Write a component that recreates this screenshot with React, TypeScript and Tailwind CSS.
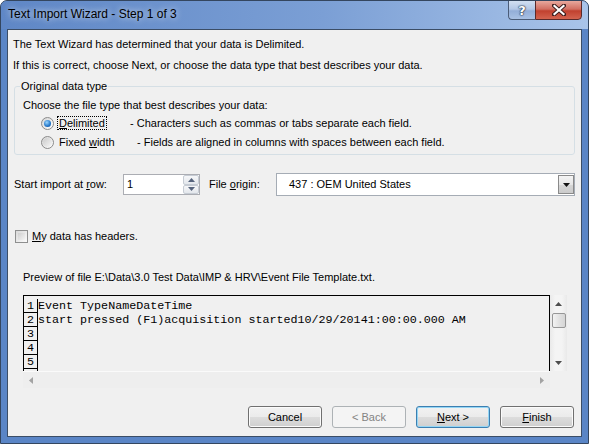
import React from "react";

function Radio({ checked }: { checked?: boolean }) {
  return (
    <span className="flex h-[13px] w-[13px] shrink-0 items-center justify-center rounded-full border border-[#8a8a8a] bg-[linear-gradient(135deg,#d4d4d4,#ffffff)]">
      {checked ? (
        <span className="h-[7px] w-[7px] rounded-full bg-[radial-gradient(circle_at_40%_35%,#9ad6ff,#2275c8_60%,#0f4f98)]" />
      ) : (
        <span className="h-[9px] w-[9px] rounded-full bg-[linear-gradient(135deg,#cbcbcb,#f7f7f7)]" />
      )}
    </span>
  );
}

function Btn({ children, kind = "normal" }: { children: React.ReactNode; kind?: "normal" | "default" | "disabled" }) {
  const look =
    kind === "disabled"
      ? "border-[#adb2b5] bg-[#f4f4f4] text-[#838383]"
      : kind === "default"
        ? "border-[#3c7fb1] bg-[linear-gradient(180deg,#f2f2f2_0%,#ebebeb_50%,#dddddd_50%,#cfcfcf_100%)] shadow-[inset_0_0_0_1px_#94d6f5]"
        : "border-[#707070] bg-[linear-gradient(180deg,#f2f2f2_0%,#ebebeb_50%,#dddddd_50%,#cfcfcf_100%)] shadow-[inset_0_0_0_1px_#fbfbfb]";
  return (
    <div className={`flex h-[22px] w-[74px] items-center justify-center rounded-[3px] border ${look}`}>
      {children}
    </div>
  );
}

function Tri({ dir, color = "#4a4a4a" }: { dir: "up" | "down" | "left" | "right"; color?: string }) {
  const pts = {
    up: "0,4 7,4 3.5,0",
    down: "0,0 7,0 3.5,4",
    left: "4,0 4,7 0,3.5",
    right: "0,0 0,7 4,3.5",
  }[dir];
  const w = dir === "up" || dir === "down" ? 7 : 4;
  const h = dir === "up" || dir === "down" ? 4 : 7;
  return (
    <svg width={w} height={h} viewBox={`0 0 ${w} ${h}`}>
      <polygon points={pts} fill={color} />
    </svg>
  );
}

// preview lines; the last cell is only partly visible, so it has no number
const rows = [
  "Event TypeNameDateTime",
  "start pressed (F1)acquisition started10/29/20141:00:00.000 AM",
  "",
  "",
  "",
];

export default function App() {
  return (
    <div className="flex h-[444px] w-[589px] flex-col overflow-hidden rounded-t-[7px] border border-[#34465f] bg-[#5a85c6] font-['Liberation_Sans',Arial,sans-serif] text-[11px] leading-[15px] text-black">
      {/* title bar */}
      <div className="flex h-[28px] shrink-0 items-start justify-between bg-[linear-gradient(90deg,#5f87c6_0%,#7b9fd5_55%,#a9c4e9_100%)]">
        <span className="pl-[7px] pt-[6px] text-[12px] [text-shadow:0_0_6px_rgba(255,255,255,0.9)]">
          Text Import Wizard - Step 1 of 3
        </span>
        <div className="-mt-px mr-[6px] flex">
          <div className="flex h-[20px] w-[27px] items-center justify-center rounded-bl-[4px] border border-r-0 border-[#4b5c78] bg-[linear-gradient(180deg,#d2dff1_0%,#b4c8e6_45%,#93aed8_55%,#a9c1e4_100%)]">
            <span className="font-['DejaVu_Sans',sans-serif] text-[13px] font-bold leading-none text-white [text-shadow:0_0_1px_#1d2c44,0_0_1px_#1d2c44,0_0_2px_#1d2c44]">
              ?
            </span>
          </div>
          <div className="flex h-[20px] w-[47px] items-center justify-center rounded-br-[4px] border border-[#5a2a2a] bg-[linear-gradient(180deg,#e8a89d_0%,#d26f62_45%,#c1412f_55%,#d3634f_100%)]">
            <svg width="14" height="12" viewBox="0 0 14 12">
              <path d="M2 1.5 L12 10.5 M12 1.5 L2 10.5" stroke="#3a1c1c" strokeWidth="4" strokeLinecap="square" />
              <path d="M2.5 2 L11.5 10 M11.5 2 L2.5 10" stroke="#ffffff" strokeWidth="2.2" strokeLinecap="square" />
            </svg>
          </div>
        </div>
      </div>

      {/* client area */}
      <div className="mx-[6px] mb-[6px] flex flex-1 flex-col border border-[#3b4d66] bg-[#f0f0f0]">
        <p className="ml-[5px] mt-[7px]">The Text Wizard has determined that your data is Delimited.</p>
        <p className="ml-[5px] mt-[6px]">If this is correct, choose Next, or choose the data type that best describes your data.</p>

        {/* group box */}
        <div className="ml-[6px] mt-[13px] h-[69px] w-[561px] rounded-[3px] border border-[#d5dfe5]">
          <div className="-mt-[8px] ml-[5px] h-[15px] w-fit bg-[#f0f0f0] px-[1px]">Original data type</div>
          <p className="ml-[8px] mt-[4px]">Choose the file type that best describes your data:</p>
          <div className="ml-[26px] mt-[2px] flex h-[16px] items-center">
            <Radio checked />
            <div className="ml-[3px] w-[73px]">
              <span className="border border-dotted border-black px-[1px]">
                <u>D</u>elimited
              </span>
            </div>
            <span>- Characters such as commas or tabs separate each field.</span>
          </div>
          <div className="ml-[26px] mt-[4px] flex h-[15px] items-center">
            <Radio />
            <div className="ml-[3px] w-[80px] pl-[2px]">
              Fixed <u>w</u>idth
            </div>
            <span>- Fields are aligned in columns with spaces between each field.</span>
          </div>
        </div>

        {/* start row / origin */}
        <div className="ml-[6px] mt-[18px] flex h-[23px] items-center">
          <span className="w-[109px]">
            Start import at <u>r</u>ow:
          </span>
          <div className="flex h-[21px] w-[77px] border border-[#abadb3] bg-white">
            <span className="flex-1 pl-[3px] leading-[19px]">1</span>
            <div className="flex w-[16px] flex-col">
              <div className="flex flex-1 items-center justify-center rounded-[2px] border border-[#c6ccd4] bg-[linear-gradient(180deg,#f6f7f9,#e3e7ec)]">
                <Tri dir="up" color="#56647d" />
              </div>
              <div className="flex flex-1 items-center justify-center rounded-[2px] border border-[#c6ccd4] bg-[linear-gradient(180deg,#f6f7f9,#e3e7ec)]">
                <Tri dir="down" color="#56647d" />
              </div>
            </div>
          </div>
          <span className="ml-[9px] w-[67px]">
            File <u>o</u>rigin:
          </span>
          <div className="flex h-[23px] w-[299px] items-center border border-[#a5acb5] bg-white">
            <span className="flex-1 pl-[12px]">437 : OEM United States</span>
            <div className="flex h-[19px] w-[16px] items-center justify-center border border-[#8a8a8a] bg-[linear-gradient(180deg,#f4f4f4_0%,#e6e6e6_50%,#d6d6d6_50%,#cbcbcb_100%)]">
              <Tri dir="down" color="#111111" />
            </div>
          </div>
        </div>

        {/* headers checkbox */}
        <div className="ml-[7px] mt-[33px] flex h-[15px] items-center">
          <span className="h-[13px] w-[13px] border border-[#8e8f8f] bg-[linear-gradient(135deg,#d8d8d8,#fbfbfb)] p-[2px]">
            <span className="block h-full w-full bg-[linear-gradient(135deg,#cfcfcf,#f4f4f4)]" />
          </span>
          <span className="ml-[4px]">
            <u>M</u>y data has headers.
          </span>
        </div>

        <p className="ml-[15px] mt-[26px]">Preview of file E:\Data\3.0 Test Data\IMP &amp; HRV\Event File Template.txt.</p>

        {/* preview */}
        <div className="ml-[15px] mt-[10px] grid w-[544px] grid-cols-[527px_17px] grid-rows-[76px_17px]">
          <div className="flex flex-col overflow-hidden border-l border-r border-t border-black pt-[3px] font-['Liberation_Mono','Courier_New',monospace] text-[11.7px]">
            {rows.map((r, i) => (
              <div key={i} className="flex h-[14px] shrink-0 leading-[14px]">
                <span className="w-[14px] shrink-0 border-b border-r border-black text-center">{i + 1}</span>
                <span className="whitespace-pre">{r}</span>
              </div>
            ))}
            <div className="w-[14px] flex-1 border-r border-black" />
          </div>
          <div className="flex flex-col items-center bg-[linear-gradient(90deg,#e9e9e9,#f4f4f4_30%,#f4f4f4_70%,#e9e9e9)]">
            <div className="flex h-[17px] items-center justify-center">
              <Tri dir="up" color="#4d4d4d" />
            </div>
            <div className="mt-px h-[15px] w-[14px] rounded-[2px] border border-[#979797] bg-[linear-gradient(90deg,#f3f3f3,#e2e2e2_50%,#d6d6d6)]" />
            <div className="flex-1" />
            <div className="flex h-[17px] items-center justify-center">
              <Tri dir="down" color="#4d4d4d" />
            </div>
          </div>
          <div className="flex items-center justify-between border-t border-[#fafafa] bg-[#eeeeee] px-[6px]">
            <Tri dir="left" color="#a3a3a3" />
            <Tri dir="right" color="#a3a3a3" />
          </div>
          <div className="bg-[#f0f0f0]" />
        </div>

        {/* buttons */}
        <div className="mt-[18px] flex justify-end gap-[10px] pr-[7px]">
          <Btn>Cancel</Btn>
          <Btn kind="disabled">&lt; Back</Btn>
          <Btn kind="default">
            <span>
              <u>N</u>ext &gt;
            </span>
          </Btn>
          <Btn>
            <span>
              <u>F</u>inish
            </span>
          </Btn>
        </div>
      </div>
    </div>
  );
}
